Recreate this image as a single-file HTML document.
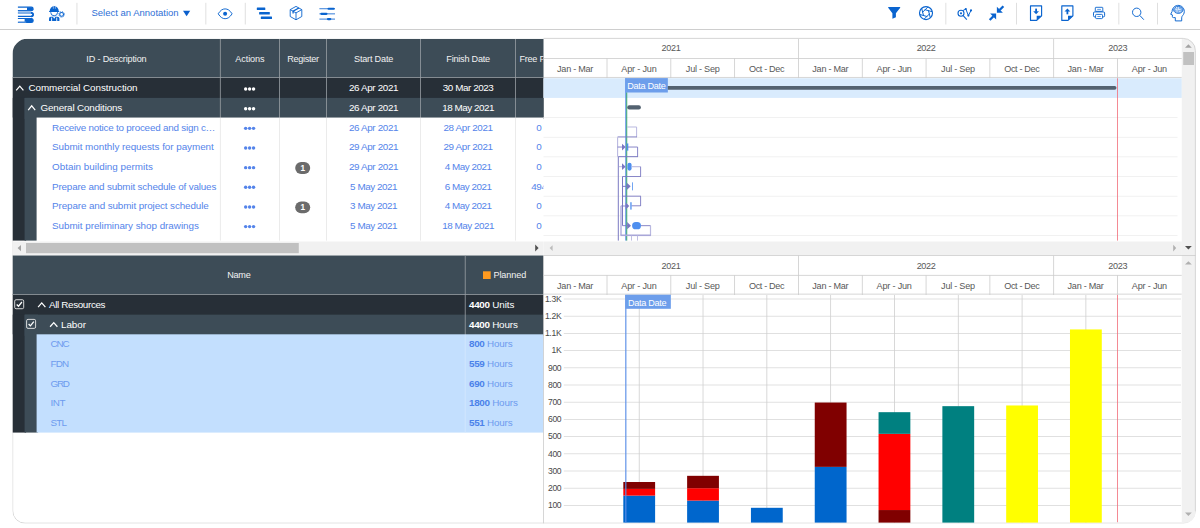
<!DOCTYPE html>
<html lang="en"><head><meta charset="utf-8"><title>Schedule - Activities</title>
<style>
html,body{margin:0;padding:0;background:#fff;overflow:hidden;width:1200px;height:528px}
#root{position:absolute;left:0;top:0;width:1525.75px;height:671.33px;transform:scale(0.7865);transform-origin:0 0;font-family:"Liberation Sans",sans-serif;overflow:hidden}
#root div{box-sizing:border-box}
svg{position:absolute;left:0;top:0}
</style></head><body>
<div id="root">
<svg width="1525.75" height="671.33" viewBox="0 0 1200 528" shape-rendering="geometricPrecision">
<rect x="0.00" y="29.05" width="1200.00" height="0.85" fill="#c6c6c6"/>
<rect x="76.50" y="2.80" width="0.90" height="21.70" fill="#dcdcdc"/>
<rect x="205.40" y="2.80" width="0.90" height="21.70" fill="#dcdcdc"/>
<rect x="244.80" y="2.80" width="0.90" height="21.70" fill="#dcdcdc"/>
<rect x="945.40" y="2.80" width="0.90" height="21.70" fill="#dcdcdc"/>
<rect x="1016.10" y="2.80" width="0.90" height="21.70" fill="#dcdcdc"/>
<rect x="1118.40" y="2.80" width="0.90" height="21.70" fill="#dcdcdc"/>
<rect x="1157.10" y="2.80" width="0.90" height="21.70" fill="#dcdcdc"/>
<defs><clipPath id="cp"><path d="M27.50,38.80 H1183.20 A12.6,12.6 0 0 1 1195.80,51.40 V511.00 A12.6,12.6 0 0 1 1183.20,523.60 H25.10 A12.6,12.6 0 0 1 12.50,511.00 V53.80 A15.0,15.0 0 0 1 27.50,38.80 Z"/></clipPath></defs>
<g clip-path="url(#cp)">
<path d="M27.50,38.80 H1183.20 A12.6,12.6 0 0 1 1195.80,51.40 V511.00 A12.6,12.6 0 0 1 1183.20,523.60 H25.10 A12.6,12.6 0 0 1 12.50,511.00 V53.80 A15.0,15.0 0 0 1 27.50,38.80 Z" fill="#fff"/>
<path d="M1195.3999999999999,511.0 A12.2,12.2 0 0 1 1183.2,523.2 H25.1 A12.2,12.2 0 0 1 12.7,511.0 V78.25" fill="none" stroke="#cccccc" stroke-width="0.8"/>
<rect x="12.50" y="38.80" width="531.00" height="39.45" fill="#3d4c57"/>
<rect x="12.50" y="77.55" width="531.00" height="40.01" fill="#272f37"/>
<rect x="12.50" y="97.91" width="13.60" height="142.69" fill="#272f37"/>
<rect x="24.60" y="97.91" width="518.90" height="21.16" fill="#3d4c57"/>
<rect x="24.60" y="97.91" width="13.50" height="142.69" fill="#3d4c57"/>
<rect x="36.60" y="117.56" width="506.90" height="123.54" fill="#fff"/>
<rect x="12.50" y="77.20" width="531.00" height="0.80" fill="#999fa4"/>
<rect x="219.90" y="39.00" width="0.80" height="78.56" fill="#999fa4"/>
<rect x="219.90" y="117.56" width="0.80" height="123.04" fill="#e6e6e6"/>
<rect x="279.10" y="39.00" width="0.80" height="78.56" fill="#999fa4"/>
<rect x="279.10" y="117.56" width="0.80" height="123.04" fill="#e6e6e6"/>
<rect x="326.10" y="39.00" width="0.80" height="78.56" fill="#999fa4"/>
<rect x="326.10" y="117.56" width="0.80" height="123.04" fill="#e6e6e6"/>
<rect x="420.20" y="39.00" width="0.80" height="78.56" fill="#999fa4"/>
<rect x="420.20" y="117.56" width="0.80" height="123.04" fill="#e6e6e6"/>
<rect x="515.20" y="39.00" width="0.80" height="78.56" fill="#999fa4"/>
<rect x="515.20" y="117.56" width="0.80" height="123.04" fill="#e6e6e6"/>
<circle cx="245.65" cy="89.03" r="1.7" fill="#fff"/>
<circle cx="249.60" cy="89.03" r="1.7" fill="#fff"/>
<circle cx="253.55" cy="89.03" r="1.7" fill="#fff"/>
<circle cx="245.65" cy="108.68" r="1.7" fill="#fff"/>
<circle cx="249.60" cy="108.68" r="1.7" fill="#fff"/>
<circle cx="253.55" cy="108.68" r="1.7" fill="#fff"/>
<circle cx="245.65" cy="128.34" r="1.7" fill="#5484ea"/>
<circle cx="249.60" cy="128.34" r="1.7" fill="#5484ea"/>
<circle cx="253.55" cy="128.34" r="1.7" fill="#5484ea"/>
<circle cx="245.65" cy="147.99" r="1.7" fill="#5484ea"/>
<circle cx="249.60" cy="147.99" r="1.7" fill="#5484ea"/>
<circle cx="253.55" cy="147.99" r="1.7" fill="#5484ea"/>
<circle cx="245.65" cy="167.65" r="1.7" fill="#5484ea"/>
<circle cx="249.60" cy="167.65" r="1.7" fill="#5484ea"/>
<circle cx="253.55" cy="167.65" r="1.7" fill="#5484ea"/>
<circle cx="245.65" cy="187.30" r="1.7" fill="#5484ea"/>
<circle cx="249.60" cy="187.30" r="1.7" fill="#5484ea"/>
<circle cx="253.55" cy="187.30" r="1.7" fill="#5484ea"/>
<circle cx="245.65" cy="206.96" r="1.7" fill="#5484ea"/>
<circle cx="249.60" cy="206.96" r="1.7" fill="#5484ea"/>
<circle cx="253.55" cy="206.96" r="1.7" fill="#5484ea"/>
<circle cx="245.65" cy="226.61" r="1.7" fill="#5484ea"/>
<circle cx="249.60" cy="226.61" r="1.7" fill="#5484ea"/>
<circle cx="253.55" cy="226.61" r="1.7" fill="#5484ea"/>
<rect x="295.2" y="162.10" width="15" height="11.8" rx="5.9" fill="#6b6b6b"/>
<rect x="295.2" y="201.41" width="15" height="11.8" rx="5.9" fill="#6b6b6b"/>
<rect x="12.50" y="241.50" width="531.00" height="13.60" fill="#f1f1f1"/>
<rect x="26.00" y="243.00" width="272.80" height="10.20" fill="#c1c1c1"/>
<rect x="12.50" y="255.50" width="531.00" height="39.50" fill="#3d4c57"/>
<rect x="12.50" y="294.50" width="531.00" height="39.81" fill="#272f37"/>
<rect x="12.50" y="314.65" width="13.60" height="117.93" fill="#272f37"/>
<rect x="24.60" y="314.65" width="518.90" height="21.16" fill="#3d4c57"/>
<rect x="24.60" y="314.65" width="13.50" height="117.93" fill="#3d4c57"/>
<rect x="36.60" y="334.31" width="506.90" height="98.28" fill="#c3dffe"/>
<rect x="12.50" y="294.10" width="531.00" height="0.80" fill="#999fa4"/>
<rect x="464.80" y="255.50" width="0.80" height="78.81" fill="#999fa4"/>
<rect x="464.80" y="334.31" width="0.80" height="98.28" fill="#d4e8fd"/>
<rect x="483.00" y="271.30" width="7.70" height="7.70" fill="#ff9a1f"/>
<rect x="543.50" y="58.00" width="638.30" height="0.80" fill="#cccccc"/>
<rect x="543.50" y="76.95" width="638.30" height="0.80" fill="#cccccc"/>
<rect x="606.61" y="58.40" width="0.80" height="19.85" fill="#cccccc"/>
<rect x="670.42" y="58.40" width="0.80" height="19.85" fill="#cccccc"/>
<rect x="734.23" y="58.40" width="0.80" height="19.85" fill="#cccccc"/>
<rect x="798.04" y="39.00" width="0.80" height="39.25" fill="#cccccc"/>
<rect x="861.85" y="58.40" width="0.80" height="19.85" fill="#cccccc"/>
<rect x="925.66" y="58.40" width="0.80" height="19.85" fill="#cccccc"/>
<rect x="989.47" y="58.40" width="0.80" height="19.85" fill="#cccccc"/>
<rect x="1053.28" y="39.00" width="0.80" height="39.25" fill="#cccccc"/>
<rect x="1117.09" y="58.40" width="0.80" height="19.85" fill="#cccccc"/>
<rect x="543.50" y="274.90" width="638.30" height="0.80" fill="#cccccc"/>
<rect x="543.50" y="293.70" width="638.30" height="0.80" fill="#cccccc"/>
<rect x="606.61" y="275.30" width="0.80" height="19.70" fill="#cccccc"/>
<rect x="670.42" y="275.30" width="0.80" height="19.70" fill="#cccccc"/>
<rect x="734.23" y="275.30" width="0.80" height="19.70" fill="#cccccc"/>
<rect x="798.04" y="255.50" width="0.80" height="39.50" fill="#cccccc"/>
<rect x="861.85" y="275.30" width="0.80" height="19.70" fill="#cccccc"/>
<rect x="925.66" y="275.30" width="0.80" height="19.70" fill="#cccccc"/>
<rect x="989.47" y="275.30" width="0.80" height="19.70" fill="#cccccc"/>
<rect x="1053.28" y="255.50" width="0.80" height="39.50" fill="#cccccc"/>
<rect x="1117.09" y="275.30" width="0.80" height="19.70" fill="#cccccc"/>
<rect x="543.50" y="78.25" width="638.30" height="19.66" fill="#d9ebfd"/>
<rect x="543.50" y="117.21" width="634.00" height="0.70" fill="#ebebeb"/>
<rect x="543.50" y="136.87" width="634.00" height="0.70" fill="#ebebeb"/>
<rect x="543.50" y="156.52" width="634.00" height="0.70" fill="#ebebeb"/>
<rect x="543.50" y="176.18" width="634.00" height="0.70" fill="#ebebeb"/>
<rect x="543.50" y="195.83" width="634.00" height="0.70" fill="#ebebeb"/>
<rect x="543.50" y="215.49" width="634.00" height="0.70" fill="#ebebeb"/>
<rect x="543.50" y="235.14" width="634.00" height="0.70" fill="#ebebeb"/>
<rect x="543.50" y="241.50" width="638.30" height="13.60" fill="#f1f1f1"/>
<rect x="1181.80" y="38.80" width="13.20" height="216.70" fill="#f1f1f1"/>
<rect x="1181.80" y="255.50" width="13.20" height="267.30" fill="#f1f1f1"/>
<rect x="1183.20" y="52.00" width="10.80" height="13.00" fill="#c1c1c1"/>
<rect x="543.50" y="255.10" width="652.30" height="0.80" fill="#cccccc"/>
<rect x="543.10" y="255.50" width="0.80" height="268.10" fill="#cccccc"/>
<rect x="563.80" y="505.00" width="617.20" height="0.80" fill="#d9d9d9"/>
<rect x="563.80" y="487.80" width="617.20" height="0.80" fill="#d9d9d9"/>
<rect x="563.80" y="470.60" width="617.20" height="0.80" fill="#d9d9d9"/>
<rect x="563.80" y="453.40" width="617.20" height="0.80" fill="#d9d9d9"/>
<rect x="563.80" y="436.20" width="617.20" height="0.80" fill="#d9d9d9"/>
<rect x="563.80" y="419.00" width="617.20" height="0.80" fill="#d9d9d9"/>
<rect x="563.80" y="401.80" width="617.20" height="0.80" fill="#d9d9d9"/>
<rect x="563.80" y="384.60" width="617.20" height="0.80" fill="#d9d9d9"/>
<rect x="563.80" y="367.40" width="617.20" height="0.80" fill="#d9d9d9"/>
<rect x="563.80" y="350.20" width="617.20" height="0.80" fill="#d9d9d9"/>
<rect x="563.80" y="333.00" width="617.20" height="0.80" fill="#d9d9d9"/>
<rect x="563.80" y="315.80" width="617.20" height="0.80" fill="#d9d9d9"/>
<rect x="563.80" y="298.60" width="617.20" height="0.80" fill="#d9d9d9"/>
<rect x="638.81" y="295.00" width="0.80" height="227.60" fill="#cfcfcf"/>
<rect x="702.62" y="295.00" width="0.80" height="227.60" fill="#cfcfcf"/>
<rect x="766.44" y="295.00" width="0.80" height="227.60" fill="#cfcfcf"/>
<rect x="830.25" y="295.00" width="0.80" height="227.60" fill="#cfcfcf"/>
<rect x="894.05" y="295.00" width="0.80" height="227.60" fill="#cfcfcf"/>
<rect x="957.87" y="295.00" width="0.80" height="227.60" fill="#cfcfcf"/>
<rect x="1021.68" y="295.00" width="0.80" height="227.60" fill="#cfcfcf"/>
<rect x="1085.48" y="295.00" width="0.80" height="227.60" fill="#cfcfcf"/>
</g>
<path d="M543.5,38.4 H1183.2 A12.2,12.2 0 0 1 1195.3999999999999,50.6 V511.0" fill="none" stroke="#cccccc" stroke-width="0.8"/>
</svg>
<div style="position:absolute;left:116px;top:6px;transform:translate(0.21px,0.40px);line-height:20px;font-size:12.10px;letter-spacing:0.000px;color:#2f6fd6;white-space:nowrap;">Select an Annotation</div>
<div style="position:absolute;left:109px;top:64px;transform:translate(0.72px,0.38px);line-height:20px;font-size:11.58px;letter-spacing:-0.203px;color:#f2f2f2;white-space:nowrap;">ID - Description</div>
<div style="position:absolute;left:299px;top:64px;transform:translate(0.25px,0.38px);line-height:20px;font-size:11.58px;letter-spacing:-0.143px;color:#f2f2f2;white-space:nowrap;">Actions</div>
<div style="position:absolute;left:365px;top:64px;transform:translate(0.08px,0.38px);line-height:20px;font-size:11.58px;letter-spacing:-0.348px;color:#f2f2f2;white-space:nowrap;">Register</div>
<div style="position:absolute;left:450px;top:64px;transform:translate(0.10px,0.38px);line-height:20px;font-size:11.58px;letter-spacing:-0.243px;color:#f2f2f2;white-space:nowrap;">Start Date</div>
<div style="position:absolute;left:567px;top:64px;transform:translate(0.44px,0.38px);line-height:20px;font-size:11.58px;letter-spacing:-0.283px;color:#f2f2f2;white-space:nowrap;">Finish Date</div>
<div style="position:absolute;left:0;top:0;width:691.04px;height:305.91px;overflow:hidden;">
<div style="position:absolute;left:660px;top:64px;transform:translate(0.54px,0.38px);line-height:20px;font-size:11.58px;letter-spacing:-0.347px;color:#f2f2f2;white-space:nowrap;">Free Float</div>
<div style="position:absolute;left:681px;top:152px;transform:translate(0.96px,0.16px);line-height:20px;font-size:12.54px;letter-spacing:-0.516px;color:#5484ea;white-space:nowrap;">0</div>
<div style="position:absolute;left:681px;top:177px;transform:translate(0.96px,0.15px);line-height:20px;font-size:12.54px;letter-spacing:-0.516px;color:#5484ea;white-space:nowrap;">0</div>
<div style="position:absolute;left:681px;top:202px;transform:translate(0.96px,0.14px);line-height:20px;font-size:12.54px;letter-spacing:-0.516px;color:#5484ea;white-space:nowrap;">0</div>
<div style="position:absolute;left:675px;top:227px;transform:translate(0.50px,0.13px);line-height:20px;font-size:12.54px;letter-spacing:-0.516px;color:#5484ea;white-space:nowrap;">494</div>
<div style="position:absolute;left:681px;top:252px;transform:translate(0.96px,0.12px);line-height:20px;font-size:12.54px;letter-spacing:-0.516px;color:#5484ea;white-space:nowrap;">0</div>
<div style="position:absolute;left:681px;top:277px;transform:translate(0.96px,0.11px);line-height:20px;font-size:12.54px;letter-spacing:-0.516px;color:#5484ea;white-space:nowrap;">0</div>
</div>
<div style="position:absolute;left:36px;top:102px;transform:translate(0.24px,0.18px);line-height:20px;font-size:12.54px;letter-spacing:-0.091px;color:#fff;white-space:nowrap;">Commercial Construction</div>
<div style="position:absolute;left:443px;top:102px;transform:translate(0.58px,0.18px);line-height:20px;font-size:12.54px;letter-spacing:-0.446px;color:#fff;white-space:nowrap;">26 Apr 2021</div>
<div style="position:absolute;left:562px;top:102px;transform:translate(0.93px,0.18px);line-height:20px;font-size:12.54px;letter-spacing:-0.541px;color:#fff;white-space:nowrap;">30 Mar 2023</div>
<div style="position:absolute;left:51px;top:127px;transform:translate(0.49px,0.17px);line-height:20px;font-size:12.54px;letter-spacing:-0.195px;color:#fff;white-space:nowrap;">General Conditions</div>
<div style="position:absolute;left:443px;top:127px;transform:translate(0.58px,0.17px);line-height:20px;font-size:12.54px;letter-spacing:-0.446px;color:#fff;white-space:nowrap;">26 Apr 2021</div>
<div style="position:absolute;left:562px;top:127px;transform:translate(0.15px,0.17px);line-height:20px;font-size:12.54px;letter-spacing:-0.590px;color:#fff;white-space:nowrap;">18 May 2021</div>
<div style="position:absolute;left:66px;top:152px;transform:translate(0.12px,0.16px);line-height:20px;font-size:12.54px;letter-spacing:-0.283px;color:#5484ea;white-space:nowrap;">Receive notice to proceed and sign c…</div>
<div style="position:absolute;left:443px;top:152px;transform:translate(0.58px,0.16px);line-height:20px;font-size:12.54px;letter-spacing:-0.446px;color:#5484ea;white-space:nowrap;">26 Apr 2021</div>
<div style="position:absolute;left:563px;top:152px;transform:translate(0.79px,0.16px);line-height:20px;font-size:12.54px;letter-spacing:-0.446px;color:#5484ea;white-space:nowrap;">28 Apr 2021</div>
<div style="position:absolute;left:66px;top:177px;transform:translate(0.12px,0.15px);line-height:20px;font-size:12.54px;letter-spacing:-0.056px;color:#5484ea;white-space:nowrap;">Submit monthly requests for payment</div>
<div style="position:absolute;left:443px;top:177px;transform:translate(0.58px,0.15px);line-height:20px;font-size:12.54px;letter-spacing:-0.446px;color:#5484ea;white-space:nowrap;">29 Apr 2021</div>
<div style="position:absolute;left:563px;top:177px;transform:translate(0.79px,0.15px);line-height:20px;font-size:12.54px;letter-spacing:-0.446px;color:#5484ea;white-space:nowrap;">29 Apr 2021</div>
<div style="position:absolute;left:66px;top:202px;transform:translate(0.12px,0.14px);line-height:20px;font-size:12.54px;letter-spacing:0.008px;color:#5484ea;white-space:nowrap;">Obtain building permits</div>
<div style="position:absolute;left:443px;top:202px;transform:translate(0.58px,0.14px);line-height:20px;font-size:12.54px;letter-spacing:-0.446px;color:#5484ea;white-space:nowrap;">29 Apr 2021</div>
<div style="position:absolute;left:565px;top:202px;transform:translate(0.38px,0.14px);line-height:20px;font-size:12.54px;letter-spacing:-0.597px;color:#5484ea;white-space:nowrap;">4 May 2021</div>
<div style="position:absolute;left:66px;top:227px;transform:translate(0.12px,0.13px);line-height:20px;font-size:12.54px;letter-spacing:-0.214px;color:#5484ea;white-space:nowrap;">Prepare and submit schedule of values</div>
<div style="position:absolute;left:445px;top:227px;transform:translate(0.16px,0.13px);line-height:20px;font-size:12.54px;letter-spacing:-0.597px;color:#5484ea;white-space:nowrap;">5 May 2021</div>
<div style="position:absolute;left:565px;top:227px;transform:translate(0.38px,0.13px);line-height:20px;font-size:12.54px;letter-spacing:-0.597px;color:#5484ea;white-space:nowrap;">6 May 2021</div>
<div style="position:absolute;left:66px;top:252px;transform:translate(0.12px,0.12px);line-height:20px;font-size:12.54px;letter-spacing:-0.141px;color:#5484ea;white-space:nowrap;">Prepare and submit project schedule</div>
<div style="position:absolute;left:445px;top:252px;transform:translate(0.16px,0.12px);line-height:20px;font-size:12.54px;letter-spacing:-0.597px;color:#5484ea;white-space:nowrap;">3 May 2021</div>
<div style="position:absolute;left:565px;top:252px;transform:translate(0.38px,0.12px);line-height:20px;font-size:12.54px;letter-spacing:-0.597px;color:#5484ea;white-space:nowrap;">4 May 2021</div>
<div style="position:absolute;left:66px;top:277px;transform:translate(0.12px,0.11px);line-height:20px;font-size:12.54px;letter-spacing:-0.043px;color:#5484ea;white-space:nowrap;">Submit preliminary shop drawings</div>
<div style="position:absolute;left:445px;top:277px;transform:translate(0.16px,0.11px);line-height:20px;font-size:12.54px;letter-spacing:-0.597px;color:#5484ea;white-space:nowrap;">5 May 2021</div>
<div style="position:absolute;left:562px;top:277px;transform:translate(0.15px,0.11px);line-height:20px;font-size:12.54px;letter-spacing:-0.590px;color:#5484ea;white-space:nowrap;">18 May 2021</div>
<div style="position:absolute;left:382px;top:203px;transform:translate(0.08px,0.35px);line-height:20px;font-size:10.50px;letter-spacing:0.000px;color:#fff;white-space:nowrap;font-weight:bold;">1</div>
<div style="position:absolute;left:382px;top:253px;transform:translate(0.08px,0.33px);line-height:20px;font-size:10.50px;letter-spacing:0.000px;color:#fff;white-space:nowrap;font-weight:bold;">1</div>
<div style="position:absolute;left:288px;top:339px;transform:translate(0.83px,0.90px);line-height:20px;font-size:11.58px;letter-spacing:-0.295px;color:#f2f2f2;white-space:nowrap;">Name</div>
<div style="position:absolute;left:627px;top:339px;transform:translate(0.34px,0.90px);line-height:20px;font-size:11.58px;letter-spacing:-0.123px;color:#f2f2f2;white-space:nowrap;">Planned</div>
<div style="position:absolute;left:62px;top:377px;transform:translate(0.30px,0.83px);line-height:20px;font-size:12.54px;letter-spacing:-0.453px;color:#fff;white-space:nowrap;">All Resources</div>
<div style="position:absolute;left:596px;top:377px;transform:translate(0.31px,0.83px);line-height:20px;font-size:12.54px;letter-spacing:-0.412px;color:#fff;white-space:nowrap;font-weight:bold;">4400</div>
<div style="position:absolute;left:625px;top:377px;transform:translate(0.75px,0.83px);line-height:20px;font-size:12.54px;letter-spacing:-0.035px;color:#fff;white-space:nowrap;">Units</div>
<div style="position:absolute;left:77px;top:402px;transform:translate(0.56px,0.82px);line-height:20px;font-size:12.54px;letter-spacing:-0.094px;color:#fff;white-space:nowrap;">Labor</div>
<div style="position:absolute;left:596px;top:402px;transform:translate(0.31px,0.82px);line-height:20px;font-size:12.54px;letter-spacing:-0.412px;color:#fff;white-space:nowrap;font-weight:bold;">4400</div>
<div style="position:absolute;left:625px;top:402px;transform:translate(0.75px,0.82px);line-height:20px;font-size:12.54px;letter-spacing:-0.192px;color:#fff;white-space:nowrap;">Hours</div>
<div style="position:absolute;left:64px;top:427px;transform:translate(0.08px,0.81px);line-height:20px;font-size:12.54px;letter-spacing:-1.307px;color:#6d9bef;white-space:nowrap;">CNC</div>
<div style="position:absolute;left:596px;top:427px;transform:translate(0.31px,0.81px);line-height:20px;font-size:12.54px;letter-spacing:-0.412px;color:#4b82ea;white-space:nowrap;font-weight:bold;">800</div>
<div style="position:absolute;left:619px;top:427px;transform:translate(0.19px,0.81px);line-height:20px;font-size:12.54px;letter-spacing:-0.192px;color:#6d9bef;white-space:nowrap;">Hours</div>
<div style="position:absolute;left:64px;top:452px;transform:translate(0.08px,0.80px);line-height:20px;font-size:12.54px;letter-spacing:-0.985px;color:#6d9bef;white-space:nowrap;">FDN</div>
<div style="position:absolute;left:596px;top:452px;transform:translate(0.31px,0.80px);line-height:20px;font-size:12.54px;letter-spacing:-0.412px;color:#4b82ea;white-space:nowrap;font-weight:bold;">559</div>
<div style="position:absolute;left:619px;top:452px;transform:translate(0.19px,0.80px);line-height:20px;font-size:12.54px;letter-spacing:-0.192px;color:#6d9bef;white-space:nowrap;">Hours</div>
<div style="position:absolute;left:64px;top:477px;transform:translate(0.08px,0.79px);line-height:20px;font-size:12.54px;letter-spacing:-1.488px;color:#6d9bef;white-space:nowrap;">GRD</div>
<div style="position:absolute;left:596px;top:477px;transform:translate(0.31px,0.79px);line-height:20px;font-size:12.54px;letter-spacing:-0.412px;color:#4b82ea;white-space:nowrap;font-weight:bold;">690</div>
<div style="position:absolute;left:619px;top:477px;transform:translate(0.19px,0.79px);line-height:20px;font-size:12.54px;letter-spacing:-0.192px;color:#6d9bef;white-space:nowrap;">Hours</div>
<div style="position:absolute;left:64px;top:502px;transform:translate(0.08px,0.78px);line-height:20px;font-size:12.54px;letter-spacing:-0.470px;color:#6d9bef;white-space:nowrap;">INT</div>
<div style="position:absolute;left:596px;top:502px;transform:translate(0.31px,0.78px);line-height:20px;font-size:12.54px;letter-spacing:-0.412px;color:#4b82ea;white-space:nowrap;font-weight:bold;">1800</div>
<div style="position:absolute;left:625px;top:502px;transform:translate(0.75px,0.78px);line-height:20px;font-size:12.54px;letter-spacing:-0.192px;color:#6d9bef;white-space:nowrap;">Hours</div>
<div style="position:absolute;left:64px;top:527px;transform:translate(0.08px,0.77px);line-height:20px;font-size:12.54px;letter-spacing:-1.013px;color:#6d9bef;white-space:nowrap;">STL</div>
<div style="position:absolute;left:596px;top:527px;transform:translate(0.31px,0.77px);line-height:20px;font-size:12.54px;letter-spacing:-0.412px;color:#4b82ea;white-space:nowrap;font-weight:bold;">551</div>
<div style="position:absolute;left:619px;top:527px;transform:translate(0.19px,0.77px);line-height:20px;font-size:12.54px;letter-spacing:-0.192px;color:#6d9bef;white-space:nowrap;">Hours</div>
<div style="position:absolute;left:841px;top:51px;transform:translate(0.18px,0.03px);line-height:20px;font-size:11.58px;letter-spacing:-0.476px;color:#585858;white-space:nowrap;">2021</div>
<div style="position:absolute;left:1165px;top:51px;transform:translate(0.52px,0.03px);line-height:20px;font-size:11.58px;letter-spacing:-0.476px;color:#585858;white-space:nowrap;">2022</div>
<div style="position:absolute;left:1409px;top:51px;transform:translate(0.23px,0.03px);line-height:20px;font-size:11.58px;letter-spacing:-0.476px;color:#585858;white-space:nowrap;">2023</div>
<div style="position:absolute;left:708px;top:77px;transform:translate(0.31px,0.25px);line-height:20px;font-size:11.58px;letter-spacing:-0.342px;color:#585858;white-space:nowrap;">Jan - Mar</div>
<div style="position:absolute;left:789px;top:77px;transform:translate(1.00px,0.25px);line-height:20px;font-size:11.58px;letter-spacing:-0.252px;color:#585858;white-space:nowrap;">Apr - Jun</div>
<div style="position:absolute;left:872px;top:77px;transform:translate(0.04px,0.25px);line-height:20px;font-size:11.58px;letter-spacing:-0.312px;color:#585858;white-space:nowrap;">Jul - Sep</div>
<div style="position:absolute;left:952px;top:77px;transform:translate(0.26px,0.25px);line-height:20px;font-size:11.58px;letter-spacing:-0.465px;color:#585858;white-space:nowrap;">Oct - Dec</div>
<div style="position:absolute;left:1032px;top:77px;transform:translate(0.83px,0.25px);line-height:20px;font-size:11.58px;letter-spacing:-0.342px;color:#585858;white-space:nowrap;">Jan - Mar</div>
<div style="position:absolute;left:1114px;top:77px;transform:translate(0.52px,0.25px);line-height:20px;font-size:11.58px;letter-spacing:-0.252px;color:#585858;white-space:nowrap;">Apr - Jun</div>
<div style="position:absolute;left:1196px;top:77px;transform:translate(0.57px,0.25px);line-height:20px;font-size:11.58px;letter-spacing:-0.312px;color:#585858;white-space:nowrap;">Jul - Sep</div>
<div style="position:absolute;left:1276px;top:77px;transform:translate(0.79px,0.25px);line-height:20px;font-size:11.58px;letter-spacing:-0.465px;color:#585858;white-space:nowrap;">Oct - Dec</div>
<div style="position:absolute;left:1357px;top:77px;transform:translate(0.36px,0.25px);line-height:20px;font-size:11.58px;letter-spacing:-0.342px;color:#585858;white-space:nowrap;">Jan - Mar</div>
<div style="position:absolute;left:1439px;top:77px;transform:translate(0.05px,0.25px);line-height:20px;font-size:11.58px;letter-spacing:-0.252px;color:#585858;white-space:nowrap;">Apr - Jun</div>
<div style="position:absolute;left:841px;top:327px;transform:translate(0.18px,0.83px);line-height:20px;font-size:11.58px;letter-spacing:-0.476px;color:#585858;white-space:nowrap;">2021</div>
<div style="position:absolute;left:1165px;top:327px;transform:translate(0.52px,0.83px);line-height:20px;font-size:11.58px;letter-spacing:-0.476px;color:#585858;white-space:nowrap;">2022</div>
<div style="position:absolute;left:1409px;top:327px;transform:translate(0.23px,0.83px);line-height:20px;font-size:11.58px;letter-spacing:-0.476px;color:#585858;white-space:nowrap;">2023</div>
<div style="position:absolute;left:708px;top:353px;transform:translate(0.31px,0.57px);line-height:20px;font-size:11.58px;letter-spacing:-0.342px;color:#585858;white-space:nowrap;">Jan - Mar</div>
<div style="position:absolute;left:789px;top:353px;transform:translate(1.00px,0.57px);line-height:20px;font-size:11.58px;letter-spacing:-0.252px;color:#585858;white-space:nowrap;">Apr - Jun</div>
<div style="position:absolute;left:872px;top:353px;transform:translate(0.04px,0.57px);line-height:20px;font-size:11.58px;letter-spacing:-0.312px;color:#585858;white-space:nowrap;">Jul - Sep</div>
<div style="position:absolute;left:952px;top:353px;transform:translate(0.26px,0.57px);line-height:20px;font-size:11.58px;letter-spacing:-0.465px;color:#585858;white-space:nowrap;">Oct - Dec</div>
<div style="position:absolute;left:1032px;top:353px;transform:translate(0.83px,0.57px);line-height:20px;font-size:11.58px;letter-spacing:-0.342px;color:#585858;white-space:nowrap;">Jan - Mar</div>
<div style="position:absolute;left:1114px;top:353px;transform:translate(0.52px,0.57px);line-height:20px;font-size:11.58px;letter-spacing:-0.252px;color:#585858;white-space:nowrap;">Apr - Jun</div>
<div style="position:absolute;left:1196px;top:353px;transform:translate(0.57px,0.57px);line-height:20px;font-size:11.58px;letter-spacing:-0.312px;color:#585858;white-space:nowrap;">Jul - Sep</div>
<div style="position:absolute;left:1276px;top:353px;transform:translate(0.79px,0.57px);line-height:20px;font-size:11.58px;letter-spacing:-0.465px;color:#585858;white-space:nowrap;">Oct - Dec</div>
<div style="position:absolute;left:1357px;top:353px;transform:translate(0.36px,0.57px);line-height:20px;font-size:11.58px;letter-spacing:-0.342px;color:#585858;white-space:nowrap;">Jan - Mar</div>
<div style="position:absolute;left:1439px;top:353px;transform:translate(0.05px,0.57px);line-height:20px;font-size:11.58px;letter-spacing:-0.252px;color:#585858;white-space:nowrap;">Apr - Jun</div>
<div style="position:absolute;left:696px;top:632px;transform:translate(0.75px,0.21px);line-height:20px;font-size:10.90px;letter-spacing:-0.424px;color:#484848;white-space:nowrap;">100</div>
<div style="position:absolute;left:696px;top:610px;transform:translate(0.75px,0.34px);line-height:20px;font-size:10.90px;letter-spacing:-0.424px;color:#484848;white-space:nowrap;">200</div>
<div style="position:absolute;left:696px;top:588px;transform:translate(0.75px,0.47px);line-height:20px;font-size:10.90px;letter-spacing:-0.424px;color:#484848;white-space:nowrap;">300</div>
<div style="position:absolute;left:696px;top:566px;transform:translate(0.75px,0.61px);line-height:20px;font-size:10.90px;letter-spacing:-0.424px;color:#484848;white-space:nowrap;">400</div>
<div style="position:absolute;left:696px;top:544px;transform:translate(0.75px,0.74px);line-height:20px;font-size:10.90px;letter-spacing:-0.424px;color:#484848;white-space:nowrap;">500</div>
<div style="position:absolute;left:696px;top:522px;transform:translate(0.75px,0.87px);line-height:20px;font-size:10.90px;letter-spacing:-0.424px;color:#484848;white-space:nowrap;">600</div>
<div style="position:absolute;left:696px;top:500px;transform:translate(0.75px,1.00px);line-height:20px;font-size:10.90px;letter-spacing:-0.424px;color:#484848;white-space:nowrap;">700</div>
<div style="position:absolute;left:696px;top:479px;transform:translate(0.75px,0.13px);line-height:20px;font-size:10.90px;letter-spacing:-0.424px;color:#484848;white-space:nowrap;">800</div>
<div style="position:absolute;left:696px;top:457px;transform:translate(0.75px,0.26px);line-height:20px;font-size:10.90px;letter-spacing:-0.424px;color:#484848;white-space:nowrap;">900</div>
<div style="position:absolute;left:701px;top:435px;transform:translate(0.27px,0.39px);line-height:20px;font-size:10.90px;letter-spacing:-0.467px;color:#484848;white-space:nowrap;">1K</div>
<div style="position:absolute;left:692px;top:413px;transform:translate(0.81px,0.52px);line-height:20px;font-size:10.90px;letter-spacing:-0.392px;color:#484848;white-space:nowrap;">1.1K</div>
<div style="position:absolute;left:692px;top:391px;transform:translate(0.81px,0.65px);line-height:20px;font-size:10.90px;letter-spacing:-0.392px;color:#484848;white-space:nowrap;">1.2K</div>
<div style="position:absolute;left:692px;top:369px;transform:translate(0.81px,0.78px);line-height:20px;font-size:10.90px;letter-spacing:-0.392px;color:#484848;white-space:nowrap;">1.3K</div>
<svg width="1525.75" height="671.33" viewBox="0 0 1200 528" shape-rendering="geometricPrecision">
<rect x="623.31" y="495.60" width="31.8" height="27.00" fill="#0066cc"/>
<rect x="623.31" y="488.89" width="31.8" height="6.71" fill="#ff0000"/>
<rect x="623.31" y="482.01" width="31.8" height="6.88" fill="#800000"/>
<rect x="687.12" y="500.58" width="31.8" height="22.02" fill="#0066cc"/>
<rect x="687.12" y="488.20" width="31.8" height="12.38" fill="#ff0000"/>
<rect x="687.12" y="475.82" width="31.8" height="12.38" fill="#800000"/>
<rect x="750.94" y="507.81" width="31.8" height="14.79" fill="#0066cc"/>
<rect x="814.75" y="466.87" width="31.8" height="55.73" fill="#0066cc"/>
<rect x="814.75" y="402.54" width="31.8" height="64.33" fill="#800000"/>
<rect x="878.55" y="510.04" width="31.8" height="12.56" fill="#800000"/>
<rect x="878.55" y="433.85" width="31.8" height="76.20" fill="#ff0000"/>
<rect x="878.55" y="412.18" width="31.8" height="21.67" fill="#008080"/>
<rect x="942.37" y="406.16" width="31.8" height="116.44" fill="#008080"/>
<rect x="1006.18" y="405.47" width="31.8" height="117.13" fill="#ffff00"/>
<rect x="1069.98" y="329.44" width="31.8" height="193.16" fill="#ffff00"/>
<rect x="625.25" y="78.25" width="1.15" height="162.35" fill="#5b8fe8"/>
<rect x="625.25" y="295.0" width="1.15" height="227.60" fill="#5b8fe8"/>
<rect x="626.35" y="92.25" width="0.85" height="148.35" fill="#1f9d55"/>
<rect x="1117.0" y="78.25" width="0.8" height="162.35" fill="#f26d7a"/>
<rect x="1117.0" y="295.0" width="0.8" height="227.20" fill="#f26d7a"/>
<rect x="625.25" y="78.1" width="42.6" height="14.4" fill="#6d9eeb"/>
<rect x="625.25" y="294.7" width="45.6" height="14.1" fill="#6d9eeb"/>
<path d="M667.8,85.9 H1114.6 a1.9,1.9 0 0 1 0,3.8 H667.8 Z" fill="#536270"/>
<rect x="627.2" y="105.3" width="13.7" height="4.2" rx="2.1" fill="#536270"/>
<line x1="627.2" y1="126.9875" x2="636.6" y2="126.9875" stroke="#b9b8e0" stroke-width="1.0"/>
<line x1="636.6" y1="126.9875" x2="636.6" y2="137.215" stroke="#b9b8e0" stroke-width="1.0"/>
<line x1="617.6" y1="136.915" x2="636.9" y2="136.915" stroke="#7a78c2" stroke-width="0.9"/>
<line x1="617.6" y1="137.215" x2="617.6" y2="156.87" stroke="#b9b8e0" stroke-width="1.1"/>
<line x1="617.6" y1="147.04250000000002" x2="623" y2="147.04250000000002" stroke="#7a78c2" stroke-width="0.9"/>
<polygon points="622.0,143.6425 625.6,147.04250000000002 622.0,150.44250000000002" fill="#7a78c2"/>
<rect x="626.9" y="143.44" width="1.4" height="7.2" fill="#4f8fef"/>
<line x1="627.5" y1="147.04250000000002" x2="637.6" y2="147.04250000000002" stroke="#7a78c2" stroke-width="0.9"/>
<line x1="637.6" y1="147.04250000000002" x2="637.6" y2="156.87" stroke="#7a78c2" stroke-width="0.9"/>
<line x1="618.2" y1="156.67000000000002" x2="638" y2="156.67000000000002" stroke="#7a78c2" stroke-width="1.0"/>
<line x1="618.3" y1="156.87" x2="618.3" y2="240.6" stroke="#7a78c2" stroke-width="1.0"/>
<line x1="619" y1="166.69750000000002" x2="623" y2="166.69750000000002" stroke="#b9b8e0" stroke-width="1.0"/>
<polygon points="622.0,163.2975 625.6,166.69750000000002 622.0,170.09750000000003" fill="#7a78c2"/>
<rect x="627.4" y="162.70" width="4.2" height="8.0" rx="2.1" fill="#4f8fef"/>
<line x1="631.6" y1="166.69750000000002" x2="640.6" y2="166.69750000000002" stroke="#b9b8e0" stroke-width="1.1"/>
<line x1="640.6" y1="166.69750000000002" x2="640.6" y2="176.525" stroke="#7a78c2" stroke-width="0.9"/>
<line x1="622.4" y1="176.525" x2="640.9" y2="176.525" stroke="#7a78c2" stroke-width="0.9"/>
<line x1="622.5" y1="176.525" x2="622.5" y2="225.66250000000002" stroke="#7a78c2" stroke-width="1.0"/>
<line x1="622.5" y1="186.35250000000002" x2="627" y2="186.35250000000002" stroke="#7a78c2" stroke-width="1.0"/>
<polygon points="626.8000000000001,182.65250000000003 630.7,186.35250000000002 626.8000000000001,190.0525" fill="#7a78c2"/>
<rect x="632.2" y="182.35" width="0.8" height="8.0" fill="#4f8fef"/>
<line x1="622.4" y1="196.18" x2="640.9" y2="196.18" stroke="#7a78c2" stroke-width="0.9"/>
<line x1="640.6" y1="196.18" x2="640.6" y2="206.00750000000002" stroke="#7a78c2" stroke-width="0.9"/>
<line x1="631.5" y1="205.80750000000003" x2="640.6" y2="205.80750000000003" stroke="#7a78c2" stroke-width="0.9"/>
<rect x="630.3" y="202.21" width="1.3" height="7.4" fill="#4f8fef"/>
<line x1="620.8" y1="206.00750000000002" x2="626" y2="206.00750000000002" stroke="#7a78c2" stroke-width="0.9"/>
<polygon points="625.6999999999999,202.60750000000002 629.3,206.00750000000002 625.6999999999999,209.40750000000003" fill="#7a78c2"/>
<line x1="621.0" y1="206.00750000000002" x2="621.0" y2="235.49" stroke="#b9b8e0" stroke-width="1.6"/>
<line x1="622.5" y1="225.66250000000002" x2="628" y2="225.66250000000002" stroke="#7a78c2" stroke-width="0.9"/>
<polygon points="627.1,221.96250000000003 631.0,225.66250000000002 627.1,229.3625" fill="#7a78c2"/>
<rect x="632.1" y="221.96" width="8.9" height="7.4" rx="3.7" fill="#4f8fef"/>
<line x1="641" y1="225.66250000000002" x2="650.6" y2="225.66250000000002" stroke="#7a78c2" stroke-width="0.9"/>
<line x1="650.5" y1="225.66250000000002" x2="650.5" y2="235.49" stroke="#b9b8e0" stroke-width="1.2"/>
<line x1="620.6" y1="235.29000000000002" x2="650.9" y2="235.29000000000002" stroke="#a9a7d8" stroke-width="1.6"/>
<line x1="631.5" y1="235.49" x2="631.5" y2="240.6" stroke="#b9b8e0" stroke-width="0.9"/>
<line x1="637.5" y1="235.49" x2="637.5" y2="240.6" stroke="#b9b8e0" stroke-width="0.9"/>
<polygon points="17.6,248.1 21.0,245.0 21.0,251.2" fill="#a3a3a3"/>
<polygon points="538.6,248.1 535.2,244.6 535.2,251.6" fill="#505050"/>
<polygon points="549.6,248.1 552.6,245.2 552.6,251.0" fill="#bcbcbc"/>
<polygon points="1176.2,248.1 1173.2,244.8 1173.2,251.4" fill="#b0b0b0"/>
<polygon points="1185.0,47.7 1191.8,47.7 1188.4,44.3" fill="#a3a3a3"/>
<polygon points="1185.0,246.0 1191.8,246.0 1188.4,249.6" fill="#505050"/>
<polygon points="1185.0,264.6 1191.8,264.6 1188.4,261.2" fill="#b0b0b0"/>
<polygon points="1185.0,512.6 1191.8,512.6 1188.4,516.0" fill="#b0b0b0"/>
<polyline points="16.2,90.3775 19.8,86.1775 23.4,90.3775" fill="none" stroke="#fff" stroke-width="1.25"/>
<polyline points="28.200000000000003,110.0325 31.7,105.8325 35.199999999999996,110.0325" fill="none" stroke="#fff" stroke-width="1.25"/>
<polyline points="38.1,307.1275 41.75,302.9275 45.4,307.1275" fill="none" stroke="#fff" stroke-width="1.25"/>
<polyline points="50.1,326.78249999999997 53.75,322.5825 57.4,326.78249999999997" fill="none" stroke="#fff" stroke-width="1.25"/>
<rect x="14.7" y="299.73" width="9.0" height="9.0" rx="1.4" fill="none" stroke="#e8e8e8" stroke-width="0.9"/>
<polyline points="16.7,304.43 18.5,306.23 21.9,302.03" fill="none" stroke="#fff" stroke-width="1.3"/>
<rect x="26.6" y="319.38" width="9.0" height="9.0" rx="1.4" fill="none" stroke="#e8e8e8" stroke-width="0.9"/>
<polyline points="28.6,324.08 30.400000000000002,325.88 33.800000000000004,321.68" fill="none" stroke="#fff" stroke-width="1.3"/>
<polygon points="183.0,10.7 190.2,10.7 186.6,16.2" fill="#0b5fcc"/>
<path d="M17.9,7.2 H31.35 a1.75,1.75 0 0 1 0,3.50 H17.9" fill="none" stroke="#0a64cf" stroke-width="1.2"/>
<path d="M27.0,7.2 H31.35 a1.75,1.75 0 0 1 0,3.50 H27.0 Z" fill="#0a64cf"/>
<path d="M17.9,12.8 H31.30 a1.80,1.80 0 0 1 0,3.60 H17.9" fill="none" stroke="#0a64cf" stroke-width="1.2"/>
<path d="M31.00,12.8 H31.30 a1.80,1.80 0 0 1 0,3.60 H31.0" fill="none" stroke="#0a64cf" stroke-width="1.7"/>
<path d="M17.9,18.5 H31.20 a1.90,1.90 0 0 1 0,3.80 H17.9" fill="none" stroke="#0a64cf" stroke-width="1.2"/>
<path d="M24.6,18.5 H31.20 a1.90,1.90 0 0 1 0,3.80 H24.6 Z" fill="#0a64cf"/>
<rect x="18.2" y="10.9" width="12.6" height="1.8" fill="#9cc0ec"/>
<rect x="18.2" y="21.6" width="8" height="1.0" fill="#6fa4e4"/>
<path d="M49.6,11.6 a4.6,5.6 0 0 1 9.2,0 Z" fill="#0a64cf"/>
<rect x="49.0" y="10.9" width="10.4" height="1.1" rx="0.5" fill="#0a64cf"/>
<rect x="52.9" y="5.6" width="0.6" height="3.2" fill="#cfe0f7"/><rect x="54.9" y="5.6" width="0.6" height="3.2" fill="#cfe0f7"/>
<path d="M50.7,12.2 a3.45,3.6 0 0 0 6.9,0" fill="none" stroke="#0a64cf" stroke-width="0.9"/>
<path d="M49.0,21.1 V18.6 a1.8,1.8 0 0 1 1.8,-1.8 H57.6 a1.8,1.8 0 0 1 1.8,1.8 V21.1 Z" fill="#0a64cf"/>
<rect x="51.2" y="17.6" width="0.9" height="3.6" fill="#fff"/><rect x="56.3" y="17.6" width="0.9" height="3.6" fill="#fff"/>
<polygon points="52.9,16.7 55.5,16.7 54.2,18.7" fill="#fff"/>
<circle cx="61.6" cy="14.4" r="1.9" fill="none" stroke="#0a64cf" stroke-width="1.1"/>
<circle cx="61.6" cy="14.4" r="2.8" fill="none" stroke="#0a64cf" stroke-width="0.9" stroke-dasharray="1.0 1.2"/>
<path d="M218.2,13.8 C220.5,10.2 222.6,8.9 225.1,8.9 C227.6,8.9 229.8,10.2 232.1,13.8 C229.8,17.4 227.6,18.7 225.1,18.7 C222.6,18.7 220.5,17.4 218.2,13.8 Z" fill="none" stroke="#0a64cf" stroke-width="0.95"/>
<circle cx="225.1" cy="13.8" r="2.0" fill="#0a64cf"/>
<rect x="256.8" y="7.4" width="8.50" height="2.6" rx="0.5" fill="#0a64cf"/>
<rect x="259.1" y="11.9" width="10.70" height="2.6" rx="0.5" fill="#0a64cf"/>
<rect x="260.8" y="16.4" width="11.20" height="2.6" rx="0.5" fill="#0a64cf"/>
<polygon points="296,6.4 301.8,9.6 301.8,16.5 296,19.8 290.2,16.5 290.2,9.6" fill="none" stroke="#0a64cf" stroke-width="0.9" stroke-linejoin="round"/>
<polyline points="290.2,9.6 296,12.9 301.8,9.6" fill="none" stroke="#0a64cf" stroke-width="0.9"/>
<line x1="296" y1="12.9" x2="296" y2="19.8" stroke="#0a64cf" stroke-width="0.9"/>
<polyline points="298.9,8.0 293.1,11.2 293.1,13.6" fill="none" stroke="#0a64cf" stroke-width="1.3"/>
<line x1="319.4" y1="8.75" x2="335.0" y2="8.75" stroke="#2a76d6" stroke-width="0.95"/>
<line x1="328.6" y1="8.75" x2="333.6" y2="8.75" stroke="#0a64cf" stroke-width="2.2" stroke-linecap="round"/>
<line x1="319.4" y1="13.85" x2="335.0" y2="13.85" stroke="#2a76d6" stroke-width="0.95"/>
<line x1="321.4" y1="13.85" x2="326.4" y2="13.85" stroke="#0a64cf" stroke-width="2.2" stroke-linecap="round"/>
<line x1="319.4" y1="19.1" x2="335.0" y2="19.1" stroke="#2a76d6" stroke-width="0.95"/>
<line x1="328.0" y1="19.1" x2="330.2" y2="19.1" stroke="#0a64cf" stroke-width="2.2" stroke-linecap="round"/>
<path d="M888.6,7.0 H899.8 a0.5,0.5 0 0 1 0.4,0.8 L895.9,13.2 V17.2 L892.4,18.8 V13.2 L888.2,7.8 a0.5,0.5 0 0 1 0.4,-0.8 Z" fill="#0a64cf"/>
<circle cx="926.0" cy="13.1" r="6.5" fill="none" stroke="#0a64cf" stroke-width="1.15"/>
<line x1="929.64" y1="13.74" x2="923.99" y2="19.28" stroke="#0a64cf" stroke-width="1.0"/>
<line x1="927.27" y1="16.58" x2="919.64" y2="14.45" stroke="#0a64cf" stroke-width="1.0"/>
<line x1="923.62" y1="15.93" x2="921.65" y2="8.27" stroke="#0a64cf" stroke-width="1.0"/>
<line x1="922.36" y1="12.46" x2="928.01" y2="6.92" stroke="#0a64cf" stroke-width="1.0"/>
<line x1="924.73" y1="9.62" x2="932.36" y2="11.75" stroke="#0a64cf" stroke-width="1.0"/>
<line x1="928.38" y1="10.27" x2="930.35" y2="17.93" stroke="#0a64cf" stroke-width="1.0"/>
<circle cx="961.0" cy="13.3" r="3.0" fill="none" stroke="#0a64cf" stroke-width="1.1"/><circle cx="961.0" cy="13.3" r="1.1" fill="#0a64cf"/>
<line x1="963.2" y1="15.7" x2="966.8" y2="19.6" stroke="#0a64cf" stroke-width="1.1"/>
<polyline points="962.9,10.6 965.8,9.0 968.4,15.6 971.0,10.4" fill="none" stroke="#0a64cf" stroke-width="1.0"/>
<circle cx="965.8" cy="9.0" r="1.1" fill="#0a64cf"/>
<circle cx="968.4" cy="15.6" r="1.1" fill="#0a64cf"/>
<circle cx="971.0" cy="10.4" r="1.1" fill="#0a64cf"/>
<polygon points="996.9,6.7 996.9,12.7 1002.9,12.7" fill="#0a64cf"/><line x1="999.6" y1="10.0" x2="1003.4" y2="6.2" stroke="#0a64cf" stroke-width="2.3"/>
<polygon points="990.1,13.6 996.1,13.6 996.1,19.6" fill="#0a64cf"/><line x1="993.4" y1="16.3" x2="989.7" y2="20.0" stroke="#0a64cf" stroke-width="2.3"/>
<path d="M1030.5,5.9 H1041.6 V15.8 L1036.7,20.4 H1030.5 Z" fill="none" stroke="#0a64cf" stroke-width="1.15" stroke-linejoin="round"/>
<polygon points="1036.7,15.8 1041.6,15.8 1036.7,20.4" fill="#0a64cf"/>
<rect x="1035.20" y="8.6" width="1.8" height="3.2" fill="#0a64cf"/><polygon points="1033.20,11.3 1039.00,11.3 1036.10,14.3" fill="#0a64cf"/>
<path d="M1061.8,5.9 H1072.8999999999999 V15.8 L1068.0,20.4 H1061.8 Z" fill="none" stroke="#0a64cf" stroke-width="1.15" stroke-linejoin="round"/>
<polygon points="1068.0,15.8 1072.8999999999999,15.8 1068.0,20.4" fill="#0a64cf"/>
<rect x="1066.50" y="11.0" width="1.8" height="3.3" fill="#0a64cf"/><polygon points="1064.50,11.5 1070.30,11.5 1067.40,8.5" fill="#0a64cf"/>
<rect x="1095.3" y="7.3" width="7.5" height="4.0" rx="0.6" fill="none" stroke="#0a64cf" stroke-width="0.9"/>
<line x1="1097.2" y1="9.4" x2="1100.9" y2="9.4" stroke="#4d8fe0" stroke-width="0.9"/>
<rect x="1093.5" y="11.9" width="11.1" height="5.0" rx="1.2" fill="#fff" stroke="#0a64cf" stroke-width="1.0"/>
<rect x="1095.6" y="14.4" width="6.9" height="4.2" rx="0.8" fill="#fff" stroke="#0a64cf" stroke-width="0.9"/>
<line x1="1097.4" y1="16.5" x2="1100.7" y2="16.5" stroke="#4d8fe0" stroke-width="0.9"/>
<circle cx="1136.7" cy="12.3" r="4.2" fill="none" stroke="#0a64cf" stroke-width="0.95"/><line x1="1139.8" y1="15.4" x2="1143.8" y2="19.7" stroke="#0a64cf" stroke-width="1.0"/>
<path d="M1175.3,20.9 V17.6 H1173.4 Q1172.4,17.6 1172.4,16.6 V14.9 L1170.7,14.3 L1172.1,11.4 A6.1,6.05 0 1 1 1182.6,15.6 Q1181.7,16.6 1181.7,17.8 V20.9 Z" fill="none" stroke="#0a64cf" stroke-width="0.95" stroke-linejoin="round"/>
<ellipse cx="1178.3" cy="9.9" rx="4.7" ry="3.5" fill="#7fb0ec" stroke="#0a64cf" stroke-width="0.8"/>
<path d="M1175.2,9.2 h1.8 v1.7 M1178.3,7.2 v2.4 h2.4 M1177.0,12.4 v-1.2 M1180.6,11.6 h-1.4 M1176.0,7.6 h1.0" fill="none" stroke="#fff" stroke-width="0.8"/>
</svg>
<div style="position:absolute;left:797px;top:99px;transform:translate(0.58px,0.10px);line-height:20px;font-size:11.58px;letter-spacing:-0.391px;color:#fff;white-space:nowrap;">Data Date</div>
<div style="position:absolute;left:798px;top:374px;transform:translate(0.47px,0.44px);line-height:20px;font-size:11.58px;letter-spacing:-0.391px;color:#fff;white-space:nowrap;">Data Date</div>
</div>
</body></html>
